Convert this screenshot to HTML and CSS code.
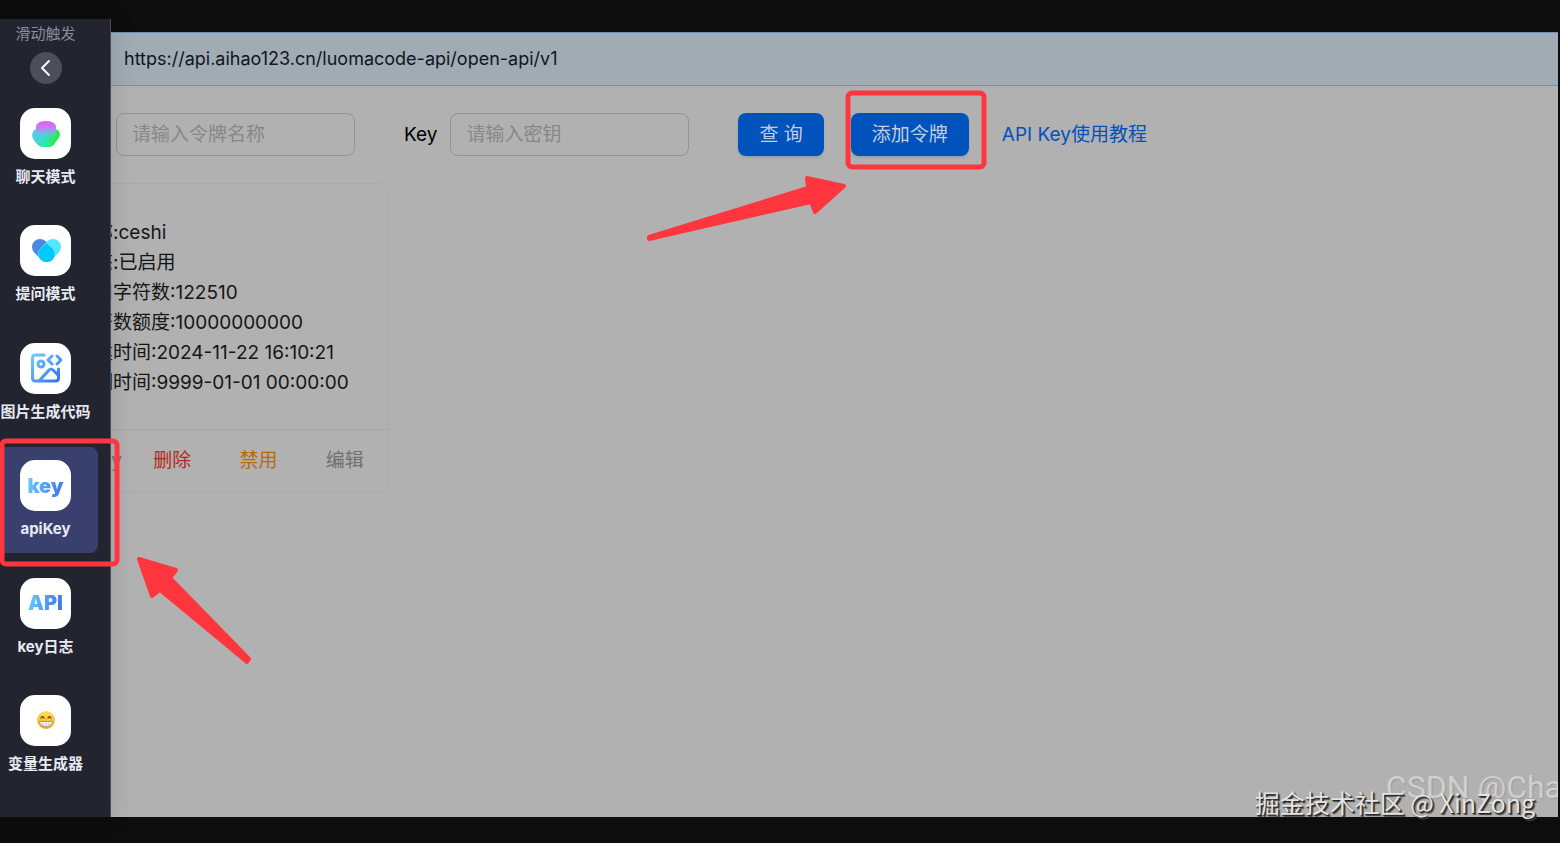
FILE: index.html
```html
<!DOCTYPE html>
<html lang="zh-CN">
  <head>
    <title>apiKey</title>
    <meta charset="utf-8">
    <link rel="stylesheet" href="styles.css">
  </head>
  <body>
    <div class="page">
      <div class="banner">https://api.aihao123.cn/luomacode-api/open-api/v1</div>

      <form class="search">
        <label class="field">令牌名称<input type="text" placeholder="请输入令牌名称"></label>
        <label class="field">Key<input type="text" placeholder="请输入密钥"></label>
        <div class="actions">
          <button type="button" class="btn">查 询</button>
          <button type="button" class="btn">添加令牌</button>
          <a href="#" class="help">API Key使用教程</a>
        </div>
      </form>

      <div class="card">
        <ul class="info">
          <li>名称:ceshi</li>
          <li>状态:已启用</li>
          <li>已用字符数:122510</li>
          <li>字符数额度:10000000000</li>
          <li>创建时间:2024-11-22 16:10:21</li>
          <li>到期时间:9999-01-01 00:00:00</li>
        </ul>
        <div class="card-footer">
          <button type="button">复制Key</button>
          <button type="button" class="danger">删除</button>
          <button type="button" class="warn">禁用</button>
          <button type="button">编辑</button>
        </div>
      </div>
      <div class="csdn">CSDN @Cha</div>
    </div>

    <aside class="drawer">
      <div class="hint">滑动触发</div>
      <button type="button" class="back" aria-label="返回">
        <svg width="32" height="32" viewBox="0 0 32 32" fill="none" stroke="#fff" stroke-width="1.8" stroke-linecap="round" stroke-linejoin="round"><path d="M19 9l-7 7 7 7"/></svg>
      </button>
      <nav class="menu">
        <a href="#" class="item">
          <span class="icon">
            <svg width="30" height="30" viewBox="0 0 30 30">
              <defs>
                <linearGradient id="chat" x1="0" y1="0" x2="1" y2="0.2"><stop offset="0" stop-color="#62c4fa"/><stop offset=".5" stop-color="#35e2c4"/><stop offset="1" stop-color="#22f03c"/></linearGradient>
                <linearGradient id="chatTop" gradientUnits="userSpaceOnUse" x1="0" y1="2" x2="0" y2="20"><stop offset="0" stop-color="#ea58f4"/><stop offset=".45" stop-color="#b489f3"/><stop offset="1" stop-color="#58d2dd" stop-opacity="0"/></linearGradient>
              </defs>
              <path d="M5 10h20q3 1 4 5 0 3-5 9-2 4-6 4h-6q-4 0-7-4-4-5-4-8 1-5 4-6z" fill="url(#chat)"/>
              <path d="M5 10V7q2-5 10-5t10 5v5l-1 8H6z" fill="url(#chatTop)"/>
            </svg>
          </span>
          聊天模式
        </a>
        <a href="#" class="item">
          <span class="icon">
            <svg width="30" height="26" viewBox="0 0 30 26" fill="none" stroke-width="16" stroke-linecap="round">
              <path d="M9 9l7 7" stroke="#4d88e2"/>
              <path d="M22 9l-7 7" stroke="#53e6ff"/>
              <path d="M15.500 5.300l5.700 5.100a8 8 0 1 1-11.400 0z" fill="#00c8fb"/>
            </svg>
          </span>
          提问模式
        </a>
        <a href="#" class="item">
          <span class="icon">
            <svg width="32" height="32" viewBox="0 0 32 32" fill="none" stroke="url(#pic)" stroke-width="3" stroke-linecap="round" stroke-linejoin="round">
              <defs>
                <linearGradient id="pic" gradientUnits="userSpaceOnUse" x1="2" y1="2" x2="28" y2="30"><stop offset="0" stop-color="#6bd0fb"/><stop offset="1" stop-color="#3672f2"/></linearGradient>
              </defs>
              <path d="M14 3H5Q2.500 3 2.500 6v20q0 3 3 3h20q3 0 3-3v-9"/>
              <circle cx="11" cy="12" r="3"/>
              <path d="M10 28l9-10q2-2 4 0l5 5"/>
              <path d="M22 4l-4 4 4 4M27 4l4 4-4 4"/>
            </svg>
          </span>
          图片生成代码
        </a>
        <a href="#" class="item active">
          <span class="icon"><b>key</b></span>
          apiKey
        </a>
        <a href="#" class="item">
          <span class="icon"><b>API</b></span>
          key日志
        </a>
        <a href="#" class="item">
          <span class="icon">
            <svg width="20" height="20" viewBox="0 0 20 20">
              <defs>
                <linearGradient id="face" x1="0" y1="0" x2="0" y2="1"><stop offset="0" stop-color="#ffe052"/><stop offset="1" stop-color="#f3a42c"/></linearGradient>
              </defs>
              <circle cx="10" cy="10" r="9" fill="url(#face)"/>
              <path d="M5 8q1.500-2.500 3 0M12 8q1.500-2.500 3 0" fill="none" stroke="#6b4217" stroke-width="1.300" stroke-linecap="round"/>
              <path d="M3.500 11.500h13q-.5 5-6.500 5t-6.500-5z" fill="#fff" stroke="#8c867c" stroke-width=".8"/>
              <path d="M4.500 14h11M7 12v4M10 12v4.500M13 12v4" stroke="#b5b2ad" stroke-width=".5"/>
            </svg>
          </span>
          变量生成器
        </a>
      </nav>
    </aside>

    <!-- marker frames and arrows over the page -->
    <svg class="marks" width="1000" height="700" viewBox="0 0 1000 700">
      <g fill="none" stroke="#ff363e" stroke-width="5">
        <rect x="2" y="441" width="115" height="123" rx="4"/>
        <rect x="848" y="93" width="136" height="74" rx="4"/>
      </g>
      <g fill="#ff363e" stroke="#ff363e" stroke-width="4" stroke-linejoin="round">
        <path d="M139 559l37 11-6 8 79 81-2 3-87-72-8 6z"/>
        <path d="M844 186l-37-8 1 10-159 49 0 2 162-37 4 10z"/>
      </g>
    </svg>
    <div class="juejin">掘金技术社区 @ XinZong</div>
  </body>
</html>
```
FILE: styles.css
```css
* {
  box-sizing: border-box;
}

body {
  margin: 0;
  min-height: 100vh;
  padding: 32px 2px 26px 0;
  display: flex;
  position: relative;
  overflow: hidden;
  background: #0d0d0d;
  color: #151515;
  font: 19px/30px Inter, "Noto Sans CJK SC", sans-serif;
}

button,
input {
  font: inherit;
}

a {
  text-decoration: none;
}

.page {
  flex: 1;
  position: relative;
  overflow: hidden;
  background: #b1b1b1;
}

.banner {
  padding: 11px 124px;
  background: #a0abb4;
  border: 1px solid #6795bb;
  border-width: 1px 0;
  color: #10161c;
  font-size: 18px;
}

.search {
  display: flex;
  align-items: center;
  gap: 49px;
  padding: 27px 27px;
  color: #000;
}

.field {
  display: flex;
  align-items: center;
  gap: 13px;
}

.field input {
  width: 239px;
  height: 43px;
  padding: 0 15px;
  background: transparent;
  border: 1px solid #949494;
  border-radius: 8px;
}

.field input::placeholder {
  color: #878787;
}

.actions {
  display: flex;
  align-items: center;
  gap: 27px;
}

.btn {
  height: 43px;
  padding: 0 21px;
  background: #0052bd;
  border: 0;
  border-radius: 8px;
  box-shadow: 0 2px 2px rgba(0, 60, 140, .15);
  color: #c3cede;
}

.help {
  margin-left: 6px;
  color: #0052bd;
}

.card {
  width: 347px;
  margin-left: 42px;
  border: 1px solid #aaa;
  border-radius: 10px;
}

.info {
  margin: 0;
  padding: 34px 32px 31px;
  list-style: none;
  white-space: nowrap;
}

.card-footer {
  display: grid;
  grid-template-columns: repeat(4, 1fr);
  border-top: 1px solid #a6a6a6;
}

.card-footer button {
  height: 62px;
  padding: 0;
  background: none;
  border: 0;
  color: #707070;
}

.card-footer .danger {
  color: #b8261a;
}

.card-footer .warn {
  color: #b96a00;
}

/* drawer */

.drawer {
  position: absolute;
  top: 19px;
  bottom: 26px;
  left: 0;
  width: 111px;
  padding-bottom: 29px;
  display: flex;
  flex-direction: column;
  background: #222430;
  border-right: 1px solid #4a4b56;
  box-shadow: 0 0 24px rgba(0, 0, 0, .12);
}

.hint {
  width: 91px;
  font-size: 15px;
  text-align: center;
  color: #8b8d9c;
}

.back {
  width: 32px;
  height: 32px;
  margin: 3px 0 11px 30px;
  padding: 0;
  background: #4b4f5c;
  border: 0;
  border-radius: 50%;
}

.back svg {
  display: block;
}

.menu {
  flex: 1;
  display: flex;
  flex-direction: column;
  justify-content: space-between;
}

.item {
  width: 98px;
  height: 106px;
  padding: 13px 7px 0 0;
  display: flex;
  flex-direction: column;
  align-items: center;
  gap: 7px;
  border-radius: 0 8px 8px 0;
  color: #e8eaf2;
  font-size: 15px;
  line-height: 22px;
  font-weight: bold;
  white-space: nowrap;
}

.item.active {
  background: #39406d;
}

.icon {
  width: 51px;
  height: 51px;
  display: flex;
  align-items: center;
  justify-content: center;
  background: #fff;
  border-radius: 15px;
}

.icon b {
  font-size: 20px;
  background: linear-gradient(100deg, #6bcdfa, #3672ee);
  -webkit-background-clip: text;
  background-clip: text;
  color: transparent;
}

/* marks and watermarks */

.marks {
  position: absolute;
  top: 0;
  left: 0;
  pointer-events: none;
}

.csdn {
  position: absolute;
  right: -4px;
  bottom: 14px;
  color: #cfcfcf;
  font: 32px/32px Roboto, sans-serif;
  text-shadow: 1px 1px 1px #999;
}

.juejin {
  position: absolute;
  right: 25px;
  bottom: 23px;
  color: #e4e4e4;
  font: 25px/36px "Noto Sans CJK SC", sans-serif;
  text-shadow: 1px 1px 1px #222, 2px 2px 1px #444;
}
```
